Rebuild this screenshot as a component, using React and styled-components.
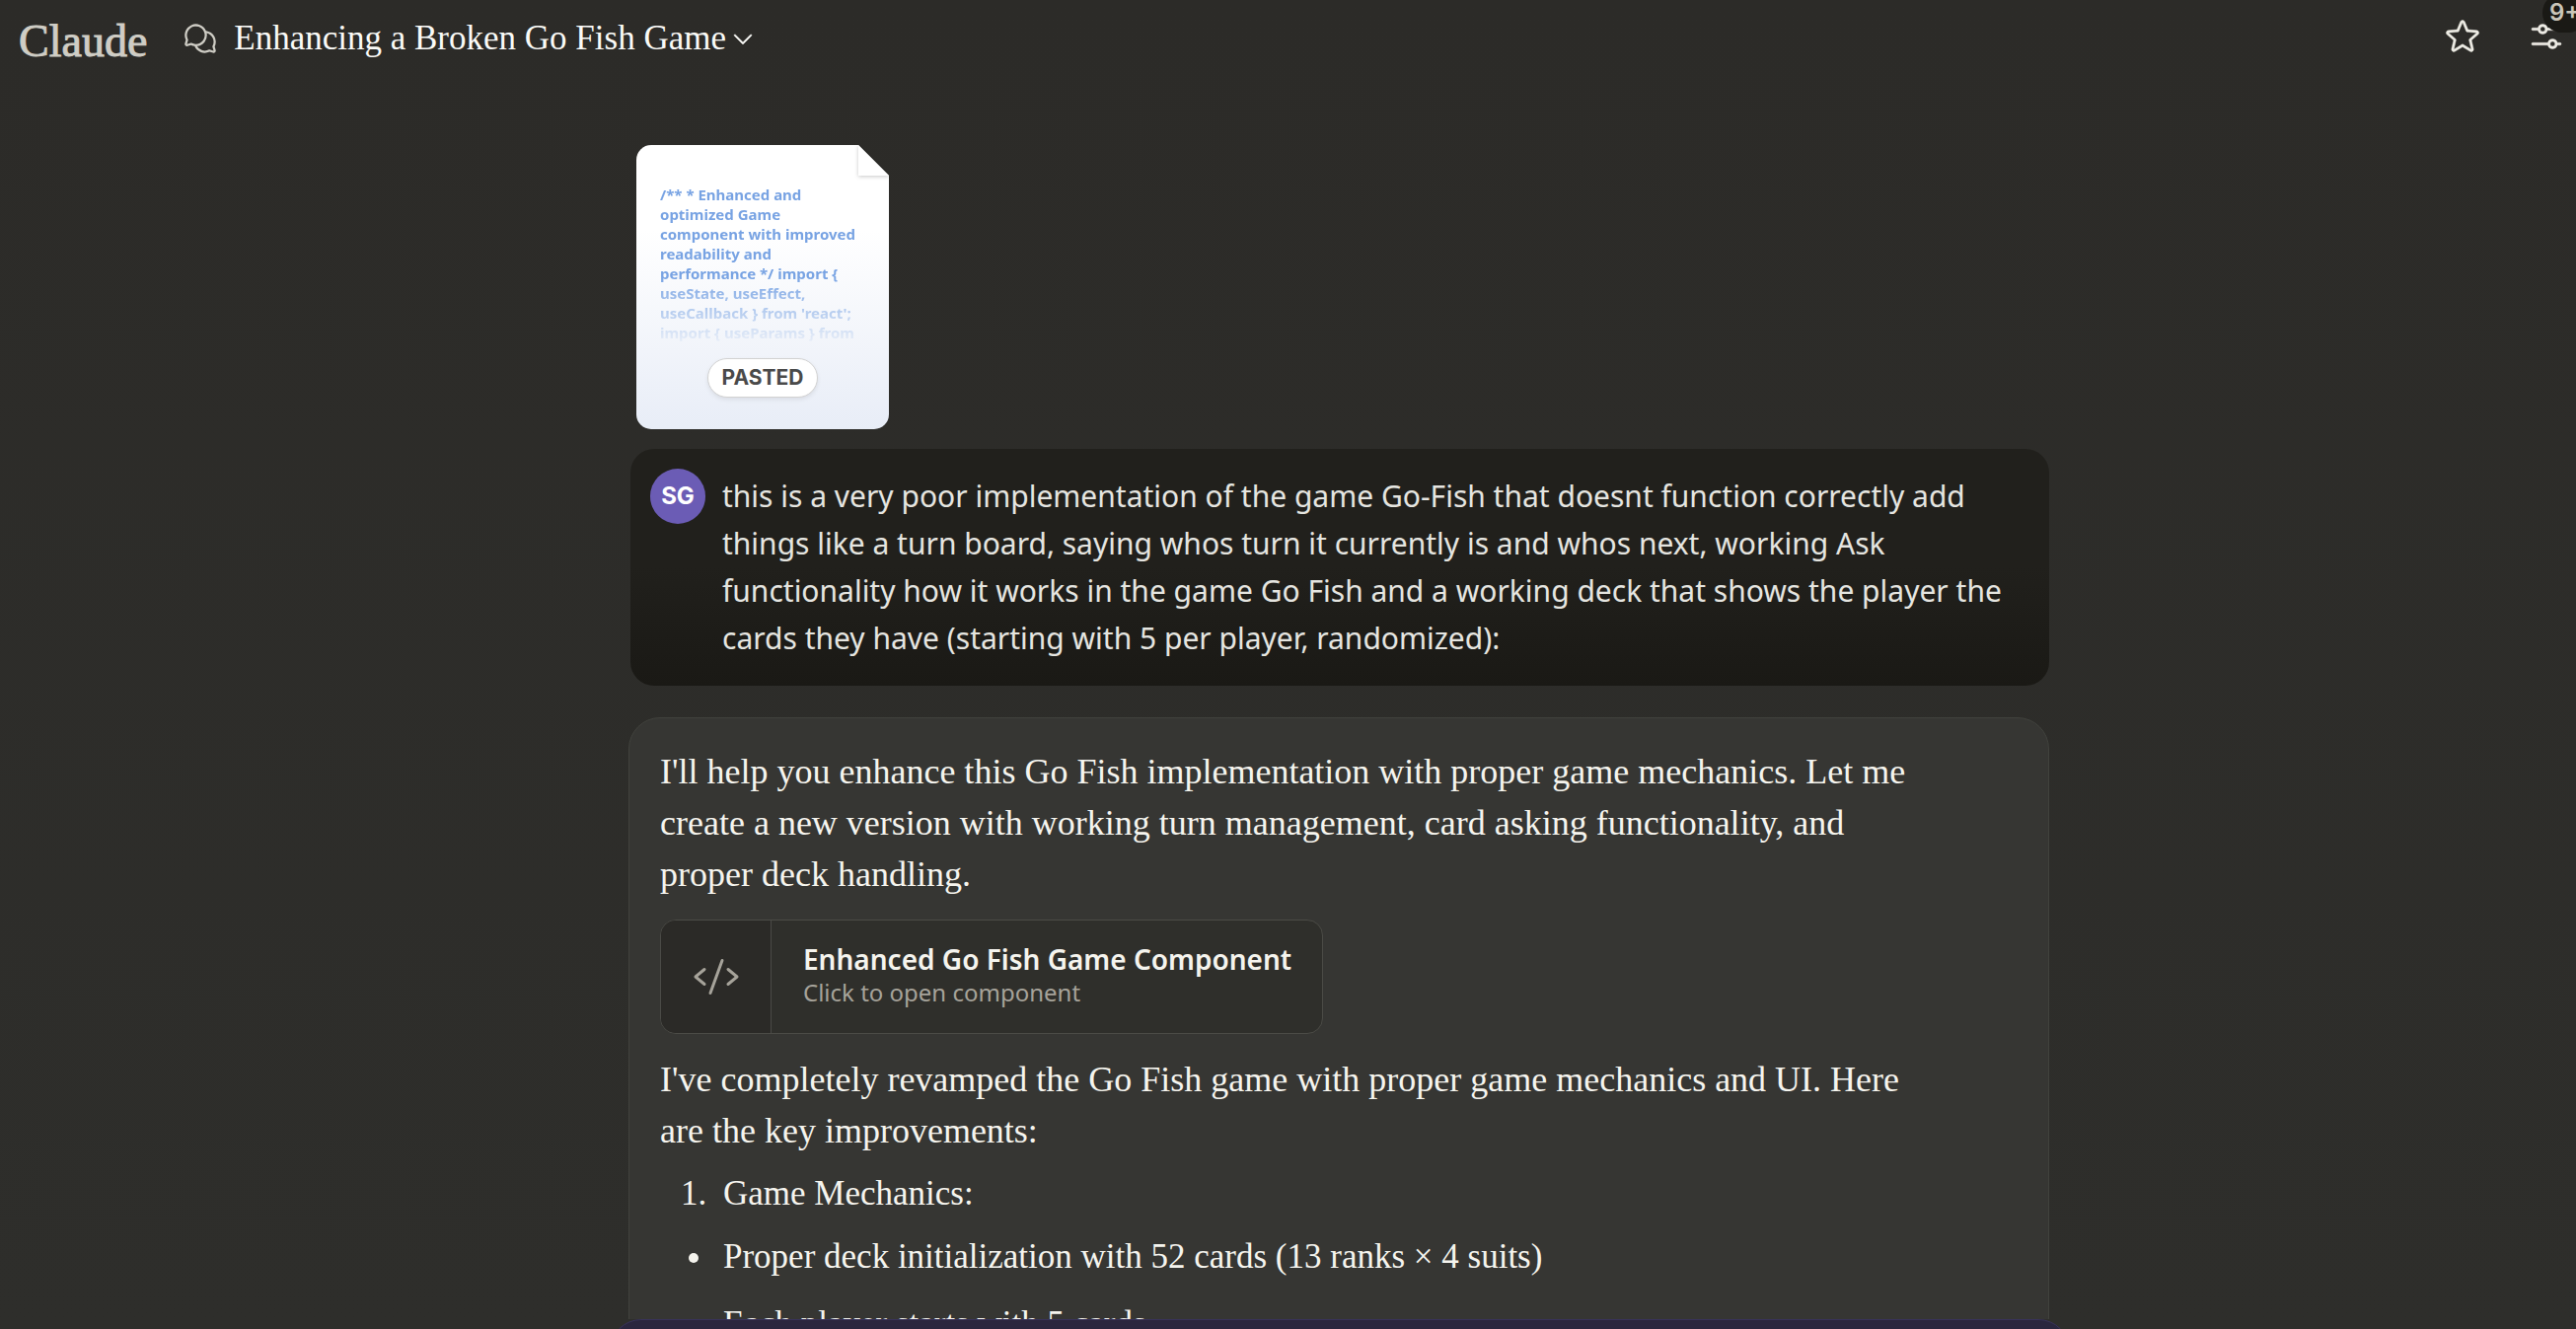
import React from 'react';
import styled, { createGlobalStyle } from 'styled-components';
import {
  PiCaretDown,
  PiChatsCircle,
  PiCode,
  PiSlidersHorizontal,
  PiStar,
} from 'react-icons/pi';

const sans = '"Noto Sans", Inter, sans-serif';
const label = 'Inter, "Noto Sans", sans-serif';
const serif = '"Liberation Serif", "Times New Roman", serif';

const GlobalStyle = createGlobalStyle`
  *, *::before, *::after { box-sizing: border-box; }
  body { margin: 0; background: #2c2b28; }
  p, ol, ul { margin: 0; padding: 0; }
  button { border: 0; padding: 0; background: none; color: inherit; font: inherit; cursor: pointer; }
`;

const Page = styled.div`
  display: flex;
  flex-direction: column;
  height: 100vh;
  overflow: hidden;
  background: linear-gradient(#2c2b28, #2e2e2b);
  color: #f5f4ee;
  font-family: ${sans};
`;

const Header = styled.header`
  display: flex;
  align-items: center;
  flex: none;
  height: 77px;
  padding: 0 10px 0 19px;
`;

const Logo = styled.a`
  margin-right: 36px;
  padding-top: 6px;
  color: #cfcdc5;
  font: 46px/60px ${serif};
  text-decoration: none;
  -webkit-text-stroke: 1px currentColor;
`;

const TitleButton = styled.button`
  display: flex;
  align-items: center;
  gap: 4px;
  color: #fafaf7;
  font: 35px/48px ${serif};
`;

const ChatsIcon = styled(PiChatsCircle)`
  width: 36px;
  height: 36px;
  margin-right: 16px;
  color: #cfcdc5;
`;

const CaretIcon = styled(PiCaretDown)`
  width: 26px;
  height: 26px;
  stroke: currentColor;
  stroke-width: 5px;
`;

const Actions = styled.div`
  display: flex;
  align-items: center;
  gap: 46px;
  margin-left: auto;
  padding-bottom: 4px;
  color: #eeece5;
`;

const IconButton = styled.button`
  position: relative;
  display: flex;

  svg {
    width: ${(p) => p.$size}px;
    height: ${(p) => p.$size}px;
    stroke: currentColor;
    stroke-width: 3px;
  }
`;

const Badge = styled.span`
  position: absolute;
  top: -24px;
  left: 16px;
  width: 46px;
  height: 40px;
  padding-left: 7px;
  border-radius: 20px;
  background: #1a1915;
  color: #c9c5b9;
  font: 600 24px/40px ${label};
  text-align: left;
`;

const Scroller = styled.main`
  flex: 1;
  min-height: 0;
  overflow: hidden;
  padding: 70px 0 0 103px;
`;

const Column = styled.div`
  display: flex;
  flex-direction: column;
  align-items: flex-start;
  width: 100%;
  max-width: 1440px;
  margin: 0 auto;
`;

const PastedFile = styled.button`
  position: relative;
  display: flex;
  flex-direction: column;
  align-items: center;
  justify-content: space-between;
  width: 256px;
  height: 288px;
  margin: 0 0 20px 8px;
  padding: 40px 24px 32px;
  border-radius: 15px;
  background: linear-gradient(#ffffff 30%, #e8edf7);
  clip-path: polygon(0 0, 225px 0, 100% 31px, 100% 100%, 0 100%);
`;

const Fold = styled.span`
  position: absolute;
  top: 0;
  right: 0;
  width: 31px;
  height: 31px;
  background: #ffffff;
  box-shadow: 0 1px 4px rgba(0, 0, 0, 0.22);
`;

const Excerpt = styled.span`
  width: 100%;
  padding-right: 8px;
  color: #78a3e3;
  font: 700 15px/20px ${sans};
  text-align: left;
  mask-image: linear-gradient(#000 58%, transparent 104%);
`;

const Pill = styled.span`
  width: 112px;
  border: 1px solid #d2d2d2;
  border-radius: 20px;
  background: #ffffff;
  box-shadow: 0 2px 4px rgba(0, 0, 0, 0.08);
  color: #4a4a4a;
  font: 700 21px/38px ${label};
  text-align: center;
`;

const UserMessage = styled.section`
  display: flex;
  align-items: flex-start;
  gap: 17px;
  align-self: stretch;
  margin: 0 0 32px 2px;
  padding: 20px 20px 24px;
  border-radius: 24px;
  background: linear-gradient(#21201c 50%, #1a1915);
  color: #e5e5e0;
`;

const Avatar = styled.div`
  flex: none;
  width: 56px;
  border-radius: 50%;
  background: #6b5cb5;
  color: #ffffff;
  font: 700 24px/56px ${label};
  text-align: center;
`;

const UserText = styled.p`
  padding-top: 4px;
  font: 30px/48px ${sans};
`;

const AssistantMessage = styled.section`
  align-self: stretch;
  padding: 28px 31px 120px;
  border: 1px solid #41423d;
  border-radius: 32px;
  background: #363633;
`;

const Prose = styled.p`
  max-width: 1288px;
  font: 36px/52px ${serif};
`;

const Artifact = styled.button`
  display: flex;
  width: 672px;
  max-width: 100%;
  height: 116px;
  margin: 20px 0;
  overflow: hidden;
  border: 1px solid #4b4b46;
  border-radius: 16px;
  background: #2f2f2b;
  text-align: left;
`;

const ArtifactIcon = styled.span`
  display: grid;
  place-items: center;
  flex: none;
  width: 112px;
  height: 100%;
  border-right: 1px solid #4b4b46;
  background: #2b2a27;
  color: #a6a39a;

  svg {
    width: 48px;
    height: 48px;
  }
`;

const ArtifactText = styled.span`
  display: flex;
  flex-direction: column;
  align-self: center;
  padding: 0 24px 4px 32px;
`;

const ArtifactTitle = styled.span`
  font: 600 28px/36px ${sans};
`;

const ArtifactHint = styled.span`
  color: #a6a39a;
  font: 24px/32px ${sans};
`;

const List = styled.ul`
  display: flex;
  flex-direction: column;
  gap: 16px;
  margin-top: 12px;
  padding-left: 56px;
  font: 35px/52px ${serif};

  li {
    padding-left: 8px;
  }
`;

const Dock = styled.footer`
  flex: none;
  height: 10px;
  padding-left: 104px;
  overflow: hidden;
`;

const Composer = styled.div`
  max-width: 1480px;
  height: 64px;
  margin: 0 auto;
  border: 1px solid #38325a;
  border-radius: 32px;
  background: #2a263e;
`;

export default function App() {
  return (
    <Page>
      <GlobalStyle />
      <Header>
        <Logo href="#">Claude</Logo>
        <ChatsIcon aria-hidden="true" />
        <TitleButton type="button">
          Enhancing a Broken Go Fish Game
          <CaretIcon aria-hidden="true" />
        </TitleButton>
        <Actions>
          <IconButton type="button" aria-label="Star" $size={38}>
            <PiStar />
          </IconButton>
          <IconButton type="button" aria-label="Chat controls" $size={40}>
            <PiSlidersHorizontal />
            <Badge>9+</Badge>
          </IconButton>
        </Actions>
      </Header>

      <Scroller>
        <Column>
          <PastedFile type="button">
            <Fold />
            <Excerpt>
              {"/** * Enhanced and optimized Game component with improved readability and performance */ import { useState, useEffect, useCallback } from 'react'; import { useParams } from"}
            </Excerpt>
            <Pill>PASTED</Pill>
          </PastedFile>

          <UserMessage>
            <Avatar>SG</Avatar>
            <UserText>
              this is a very poor implementation of the game Go-Fish that doesnt
              function correctly add things like a turn board, saying whos turn
              it currently is and whos next, working Ask functionality how it
              works in the game Go Fish and a working deck that shows the player
              the cards they have (starting with 5 per player, randomized):
            </UserText>
          </UserMessage>

          <AssistantMessage>
            <Prose>
              I'll help you enhance this Go Fish implementation with proper game
              mechanics. Let me create a new version with working turn
              management, card asking functionality, and proper deck handling.
            </Prose>
            <Artifact type="button">
              <ArtifactIcon>
                <PiCode aria-hidden="true" />
              </ArtifactIcon>
              <ArtifactText>
                <ArtifactTitle>Enhanced Go Fish Game Component</ArtifactTitle>
                <ArtifactHint>Click to open component</ArtifactHint>
              </ArtifactText>
            </Artifact>
            <Prose>
              I've completely revamped the Go Fish game with proper game
              mechanics and UI. Here are the key improvements:
            </Prose>
            <List as="ol">
              <li>Game Mechanics:</li>
            </List>
            <List>
              <li>Proper deck initialization with 52 cards (13 ranks × 4 suits)</li>
              <li>Each player starts with 5 cards</li>
            </List>
          </AssistantMessage>
        </Column>
      </Scroller>

      <Dock>
        <Composer />
      </Dock>
    </Page>
  );
}
